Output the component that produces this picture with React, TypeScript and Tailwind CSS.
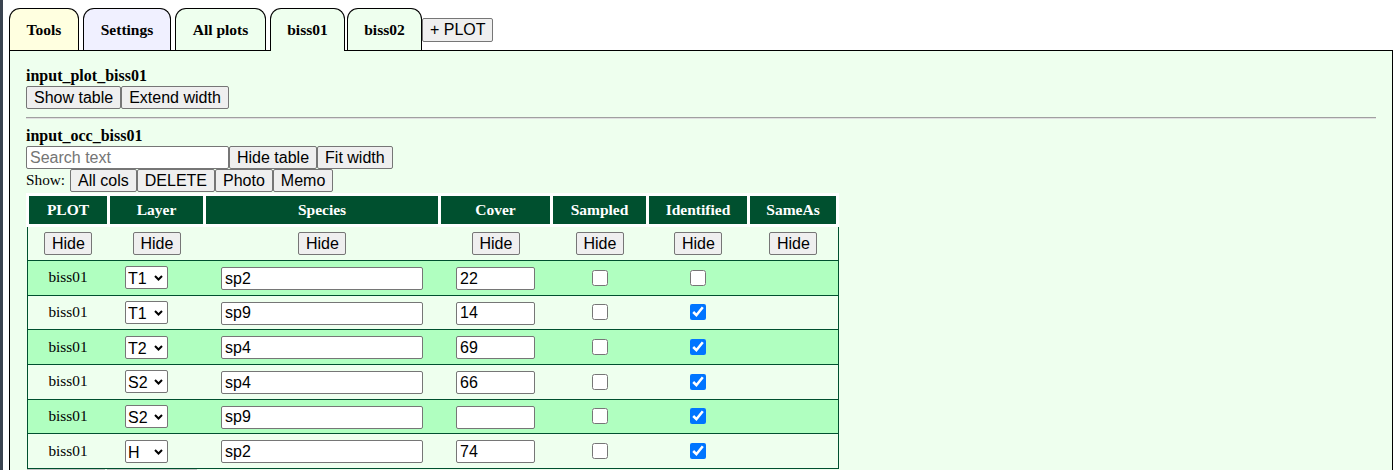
import React from "react";

const serif = "font-['Liberation_Serif','Times_New_Roman',serif]";
const sans = "font-['Liberation_Sans',Arial,sans-serif]";

const btn =
  "h-[23px] px-[7px] whitespace-nowrap bg-[#efefef] border border-[#767676] rounded-[2px] text-[16px] leading-none text-black font-['Liberation_Sans',Arial,sans-serif]";
const field =
  "h-[23px] px-[3px] bg-white border border-[#767676] rounded-[2px] text-[16px] text-black font-['Liberation_Sans',Arial,sans-serif] outline-none";

const cols = "grid grid-cols-[78px_93px_232px_109px_93px_98px_86px] gap-x-[3px]";

const rows = [
  { layer: "T1", sp: "sp2", cover: "22", sampled: false, identified: false },
  { layer: "T1", sp: "sp9", cover: "14", sampled: false, identified: true },
  { layer: "T2", sp: "sp4", cover: "69", sampled: false, identified: true },
  { layer: "S2", sp: "sp4", cover: "66", sampled: false, identified: true },
  { layer: "S2", sp: "sp9", cover: "", sampled: false, identified: true },
  { layer: "H", sp: "sp2", cover: "74", sampled: false, identified: true },
];

const heads = ["PLOT", "Layer", "Species", "Cover", "Sampled", "Identified", "SameAs"];

function Tab({ label, bg, width, active, ml }: { label: string; bg: string; width: string; active?: boolean; ml: string }) {
  return (
    <div
      className={`${width} ${ml} ${bg} ${
        active ? "h-[43px] -mb-[1px] border-b-0 relative z-10" : "h-[42px] border-b-0"
      } flex items-center justify-center border border-black rounded-t-[11px] font-bold text-[15.5px] ${serif}`}
    >
      {label}
    </div>
  );
}

function LayerSelect({ value }: { value: string }) {
  return (
    <div className="relative w-[43px] h-[23px] ml-[15px]">
      <select
        defaultValue={value}
        className={`appearance-none w-full h-full pl-[2px] bg-white border border-[#767676] rounded-[2px] text-[16px] text-black ${sans}`}
      >
        {["T1", "T2", "S1", "S2", "H"].map((o) => (
          <option key={o}>{o}</option>
        ))}
      </select>
      <svg
        className="absolute right-[5px] top-[9px] pointer-events-none"
        width="9"
        height="6"
        viewBox="0 0 9 6"
      >
        <path d="M1 1 L4.5 4.5 L8 1" fill="none" stroke="#000" strokeWidth="2" />
      </svg>
    </div>
  );
}

export default function App() {
  return (
    <div className="flex min-h-[470px] bg-white text-black">
      <div className="w-[3px] bg-[#3a4350] shrink-0" />
      <div className="flex-1 ml-[6px] mr-[7px] flex flex-col">
        {/* tabs */}
        <div className="flex items-end pt-[8px]">
          <Tab label="Tools" bg="bg-[#ffffe0]" width="w-[70px]" ml="ml-0" />
          <Tab label="Settings" bg="bg-[#f0f0ff]" width="w-[88px]" ml="ml-[4px]" />
          <Tab label="All plots" bg="bg-[#eeffee]" width="w-[91px]" ml="ml-[4px]" />
          <Tab label="biss01" bg="bg-[#eeffee]" width="w-[75px]" ml="ml-[4px]" active />
          <Tab label="biss02" bg="bg-[#eeffee]" width="w-[75px]" ml="ml-[2px]" />
          <button className={`${btn} self-start mt-[10px] w-[71px] h-[24px] px-[5px]`}>+ PLOT</button>
        </div>

        {/* panel */}
        <div className="flex-1 border border-black bg-[#eeffee] pt-[15px] px-[16px] pb-[20px]">
          <div className={`font-bold text-[16px] leading-[20px] ${serif}`}>input_plot_biss01</div>
          <div className="flex">
            <button className={btn}>Show table</button>
            <button className={btn}>Extend width</button>
          </div>
          <div className="mt-[8px] h-[2px] border-t border-t-[#a0a0a0] border-b border-b-[#e0e0e0]" />

          <div className={`mt-[7px] font-bold text-[16px] leading-[20px] ${serif}`}>input_occ_biss01</div>
          <div className="flex">
            <input className={`${field} w-[203px] placeholder:text-[#757575]`} placeholder="Search text" />
            <button className={btn}>Hide table</button>
            <button className={btn}>Fit width</button>
          </div>
          <div className="flex items-center">
            <span className={`text-[15.3px] mr-[5px] ${serif}`}>Show:</span>
            <button className={btn}>All cols</button>
            <button className={btn}>DELETE</button>
            <button className={btn}>Photo</button>
            <button className={btn}>Memo</button>
          </div>

          {/* table */}
          <div className="mt-[1px] w-[813px]">
            <div className={`${cols} bg-white p-[3px]`}>
              {heads.map((h) => (
                <div
                  key={h}
                  className={`h-[28px] bg-[#00502f] text-white font-bold text-[15.5px] flex items-center justify-center ${serif}`}
                >
                  {h}
                </div>
              ))}
            </div>
            <div className="ml-[1px] w-[812px] border-x border-[#00502f]">
              <div className={`${cols} pl-[1px] h-[34px] items-center border-b border-[#00502f]`}>
                {heads.map((h) => (
                  <div key={h} className="flex justify-center">
                    <button className={`${btn} w-[48px]`}>Hide</button>
                  </div>
                ))}
              </div>
              {rows.map((r, i) => (
                <div
                  key={i}
                  className={`${cols} pl-[1px] h-[34.67px] items-center border-b border-[#00502f] ${
                    i % 2 === 0 ? "bg-[#b0ffc0]" : "bg-[#eeffee]"
                  }`}
                >
                  <div className={`text-center text-[15.3px] ${serif}`}>biss01</div>
                  <div>
                    <LayerSelect value={r.layer} />
                  </div>
                  <div>
                    <input className={`${field} w-[202px] ml-[15px]`} defaultValue={r.sp} />
                  </div>
                  <div>
                    <input className={`${field} w-[79px] ml-[15px]`} defaultValue={r.cover} />
                  </div>
                  <div className="flex justify-center">
                    <input type="checkbox" className="w-[16px] h-[16px]" defaultChecked={r.sampled} />
                  </div>
                  <div className="flex justify-center">
                    <input type="checkbox" className="w-[16px] h-[16px]" defaultChecked={r.identified} />
                  </div>
                  <div />
                </div>
              ))}
            </div>
            <div className="flex gap-[2px] ml-[1px]">
              <div className="w-[78px] h-[20px] bg-[#c4c4c4]" />
              <div className="w-[90px] h-[20px] bg-[#c4c4c4]" />
            </div>
          </div>
        </div>
      </div>
    </div>
  );
}
